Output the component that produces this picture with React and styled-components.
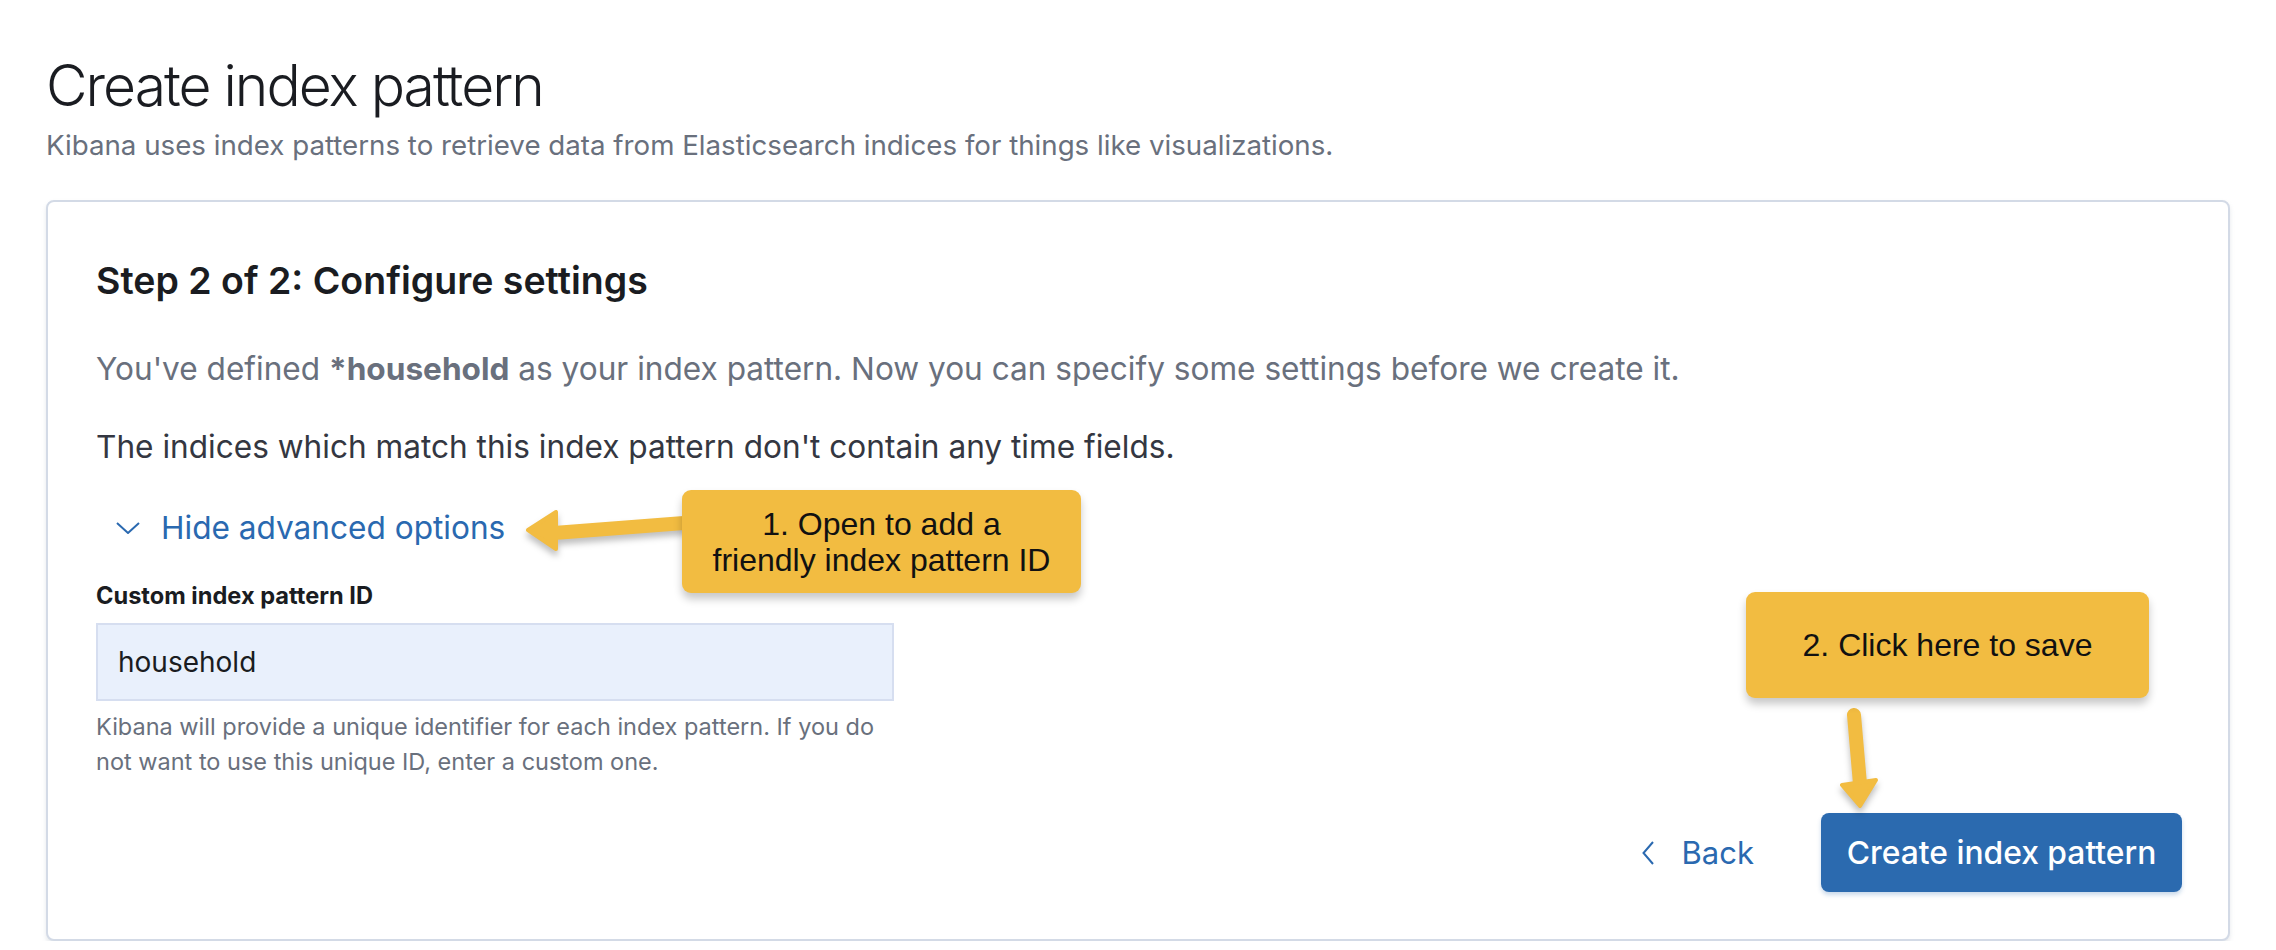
import React from 'react';
import styled, { createGlobalStyle } from 'styled-components';

const GlobalStyle = createGlobalStyle`
  html, body {
    margin: 0;
    padding: 0;
    background: #ffffff;
  }
  body {
    font-family: Inter, "Noto Sans", sans-serif;
    -webkit-font-smoothing: antialiased;
  }
`;

const Page = styled.div`
  padding: 52px 46px 0 46px;
`;

const PageTitle = styled.h1`
  margin: 0;
  font-size: 57px;
  line-height: 68px;
  font-weight: 300;
  color: #1a1c21;
  letter-spacing: -2px;
`;

const PageSubtitle = styled.p`
  margin: 7px 0 0 0;
  font-size: 27.7px;
  line-height: 36px;
  color: #69707d;
`;

const Panel = styled.div`
  position: relative;
  margin-top: 37px;
  border: 2px solid #d3dae6;
  border-radius: 8px;
  background: #fff;
  box-shadow: 0 3px 4px rgba(152, 162, 179, 0.25);
  padding: 56px 46px 47px 48px;
`;

const StepTitle = styled.h2`
  margin: 0;
  font-size: 37.5px;
  line-height: 46px;
  font-weight: 600;
  color: #1a1c21;
`;

const Text = styled.p`
  margin: ${p => p.$mt}px 0 0 0;
  font-size: 31.6px;
  line-height: 42px;
  color: ${p => (p.$muted ? '#69707d' : '#343741')};

  strong {
    font-weight: 700;
  }
`;

const Toggle = styled.button`
  display: flex;
  align-items: center;
  gap: 21px;
  margin: 39px 0 0 0;
  padding: 0 0 0 20px;
  border: none;
  background: none;
  font-family: inherit;
  font-size: 31.6px;
  line-height: 42px;
  color: #2a69b0;
  cursor: pointer;
`;

const Label = styled.label`
  display: block;
  margin-top: 32px;
  font-size: 23.6px;
  line-height: 30px;
  font-weight: 700;
  color: #1a1c21;
`;

const Input = styled.input`
  display: block;
  box-sizing: border-box;
  margin-top: 12px;
  width: 798px;
  height: 78px;
  padding: 0 20px;
  border: 2px solid #d6def0;
  background: #e9f0fc;
  font-family: inherit;
  font-size: 28px;
  color: #1a1c21;
  outline: none;
`;

const HelpText = styled.div`
  margin-top: 8px;
  width: 798px;
  font-size: 23.5px;
  line-height: 35px;
  color: #69707d;
`;

const Footer = styled.div`
  display: flex;
  justify-content: flex-end;
  align-items: center;
  gap: 67px;
  margin-top: 34px;
`;

const BackLink = styled.button`
  display: flex;
  align-items: center;
  gap: 28px;
  padding: 0;
  border: none;
  background: none;
  font-family: inherit;
  font-size: 31px;
  line-height: 42px;
  color: #2a69b0;
  cursor: pointer;
`;

const PrimaryButton = styled.button`
  width: 361px;
  height: 79px;
  border: none;
  border-radius: 8px;
  background: #2b6aaf;
  color: #fff;
  font-family: inherit;
  font-size: 31.8px;
  font-weight: 500;
  box-shadow: 0 3px 4px rgba(43, 106, 175, 0.25);
  cursor: pointer;
`;

const Callout = styled.div`
  position: absolute;
  left: ${p => p.$left}px;
  top: ${p => p.$top}px;
  width: ${p => p.$width}px;
  height: ${p => p.$height}px;
  display: flex;
  align-items: center;
  justify-content: center;
  text-align: center;
  box-sizing: border-box;
  background: #f2bc41;
  border-radius: 9px;
  box-shadow: 0 6px 8px rgba(0, 0, 0, 0.22);
  font-family: "Liberation Sans", Arial, sans-serif;
  font-size: 32px;
  line-height: 36px;
  color: #111;
  z-index: 2;
`;

const Arrow = styled.svg`
  position: absolute;
  left: ${p => p.$left}px;
  top: ${p => p.$top}px;
  overflow: visible;
  filter: drop-shadow(0 5px 3px rgba(0, 0, 0, 0.25));
  z-index: 1;
`;

const ChevronDown = () => (
  <svg width="24" height="12" viewBox="0 0 24 12">
    <polyline points="1,1 12,11 23,1" fill="none" stroke="#2a69b0" strokeWidth="2" />
  </svg>
);

const ChevronLeft = () => (
  <svg width="12" height="24" viewBox="0 0 12 24">
    <polyline points="11,1 1.5,12 11,23" fill="none" stroke="#2a69b0" strokeWidth="2" />
  </svg>
);

export default function App() {
  return (
    <>
      <GlobalStyle />
      <Page>
        <PageTitle>Create index pattern</PageTitle>
        <PageSubtitle>
          Kibana uses index patterns to retrieve data from Elasticsearch indices for things like visualizations.
        </PageSubtitle>

        <Panel>
          <StepTitle>Step 2 of 2: Configure settings</StepTitle>
          <Text $muted $mt={44}>
            You've defined <strong>*household</strong> as your index pattern. Now you can specify some settings before we create it.
          </Text>
          <Text $mt={36}>The indices which match this index pattern don't contain any time fields.</Text>

          <Toggle>
            <ChevronDown />
            Hide advanced options
          </Toggle>

          <Label htmlFor="custom-id">Custom index pattern ID</Label>
          <Input id="custom-id" defaultValue="household" />
          <HelpText>
            Kibana will provide a unique identifier for each index pattern. If you do not want to use this unique ID, enter a custom one.
          </HelpText>

          <Footer>
            <BackLink>
              <ChevronLeft />
              Back
            </BackLink>
            <PrimaryButton>Create index pattern</PrimaryButton>
          </Footer>

          <Arrow $left={472} $top={303} width="170" height="57" viewBox="0 0 170 57">
            <line x1="34" y1="28" x2="164" y2="18" stroke="#f2bc41" strokeWidth="14" strokeLinecap="round" />
            <polygon points="8,25 36,7 36,44" fill="#f2bc41" stroke="#f2bc41" strokeWidth="4" strokeLinejoin="round" />
          </Arrow>
          <Callout $left={634} $top={288} $width={399} $height={103}>
            1. Open to add a<br />friendly index pattern ID
          </Callout>

          <Arrow $left={1787} $top={498} width="50" height="112" viewBox="0 0 50 112">
            <line x1="19" y1="15" x2="25" y2="84" stroke="#f2bc41" strokeWidth="14" strokeLinecap="round" />
            <polygon points="7,85 41,80 25,106" fill="#f2bc41" stroke="#f2bc41" strokeWidth="4" strokeLinejoin="round" />
          </Arrow>
          <Callout $left={1698} $top={390} $width={403} $height={106}>
            2. Click here to save
          </Callout>
        </Panel>
      </Page>
    </>
  );
}
